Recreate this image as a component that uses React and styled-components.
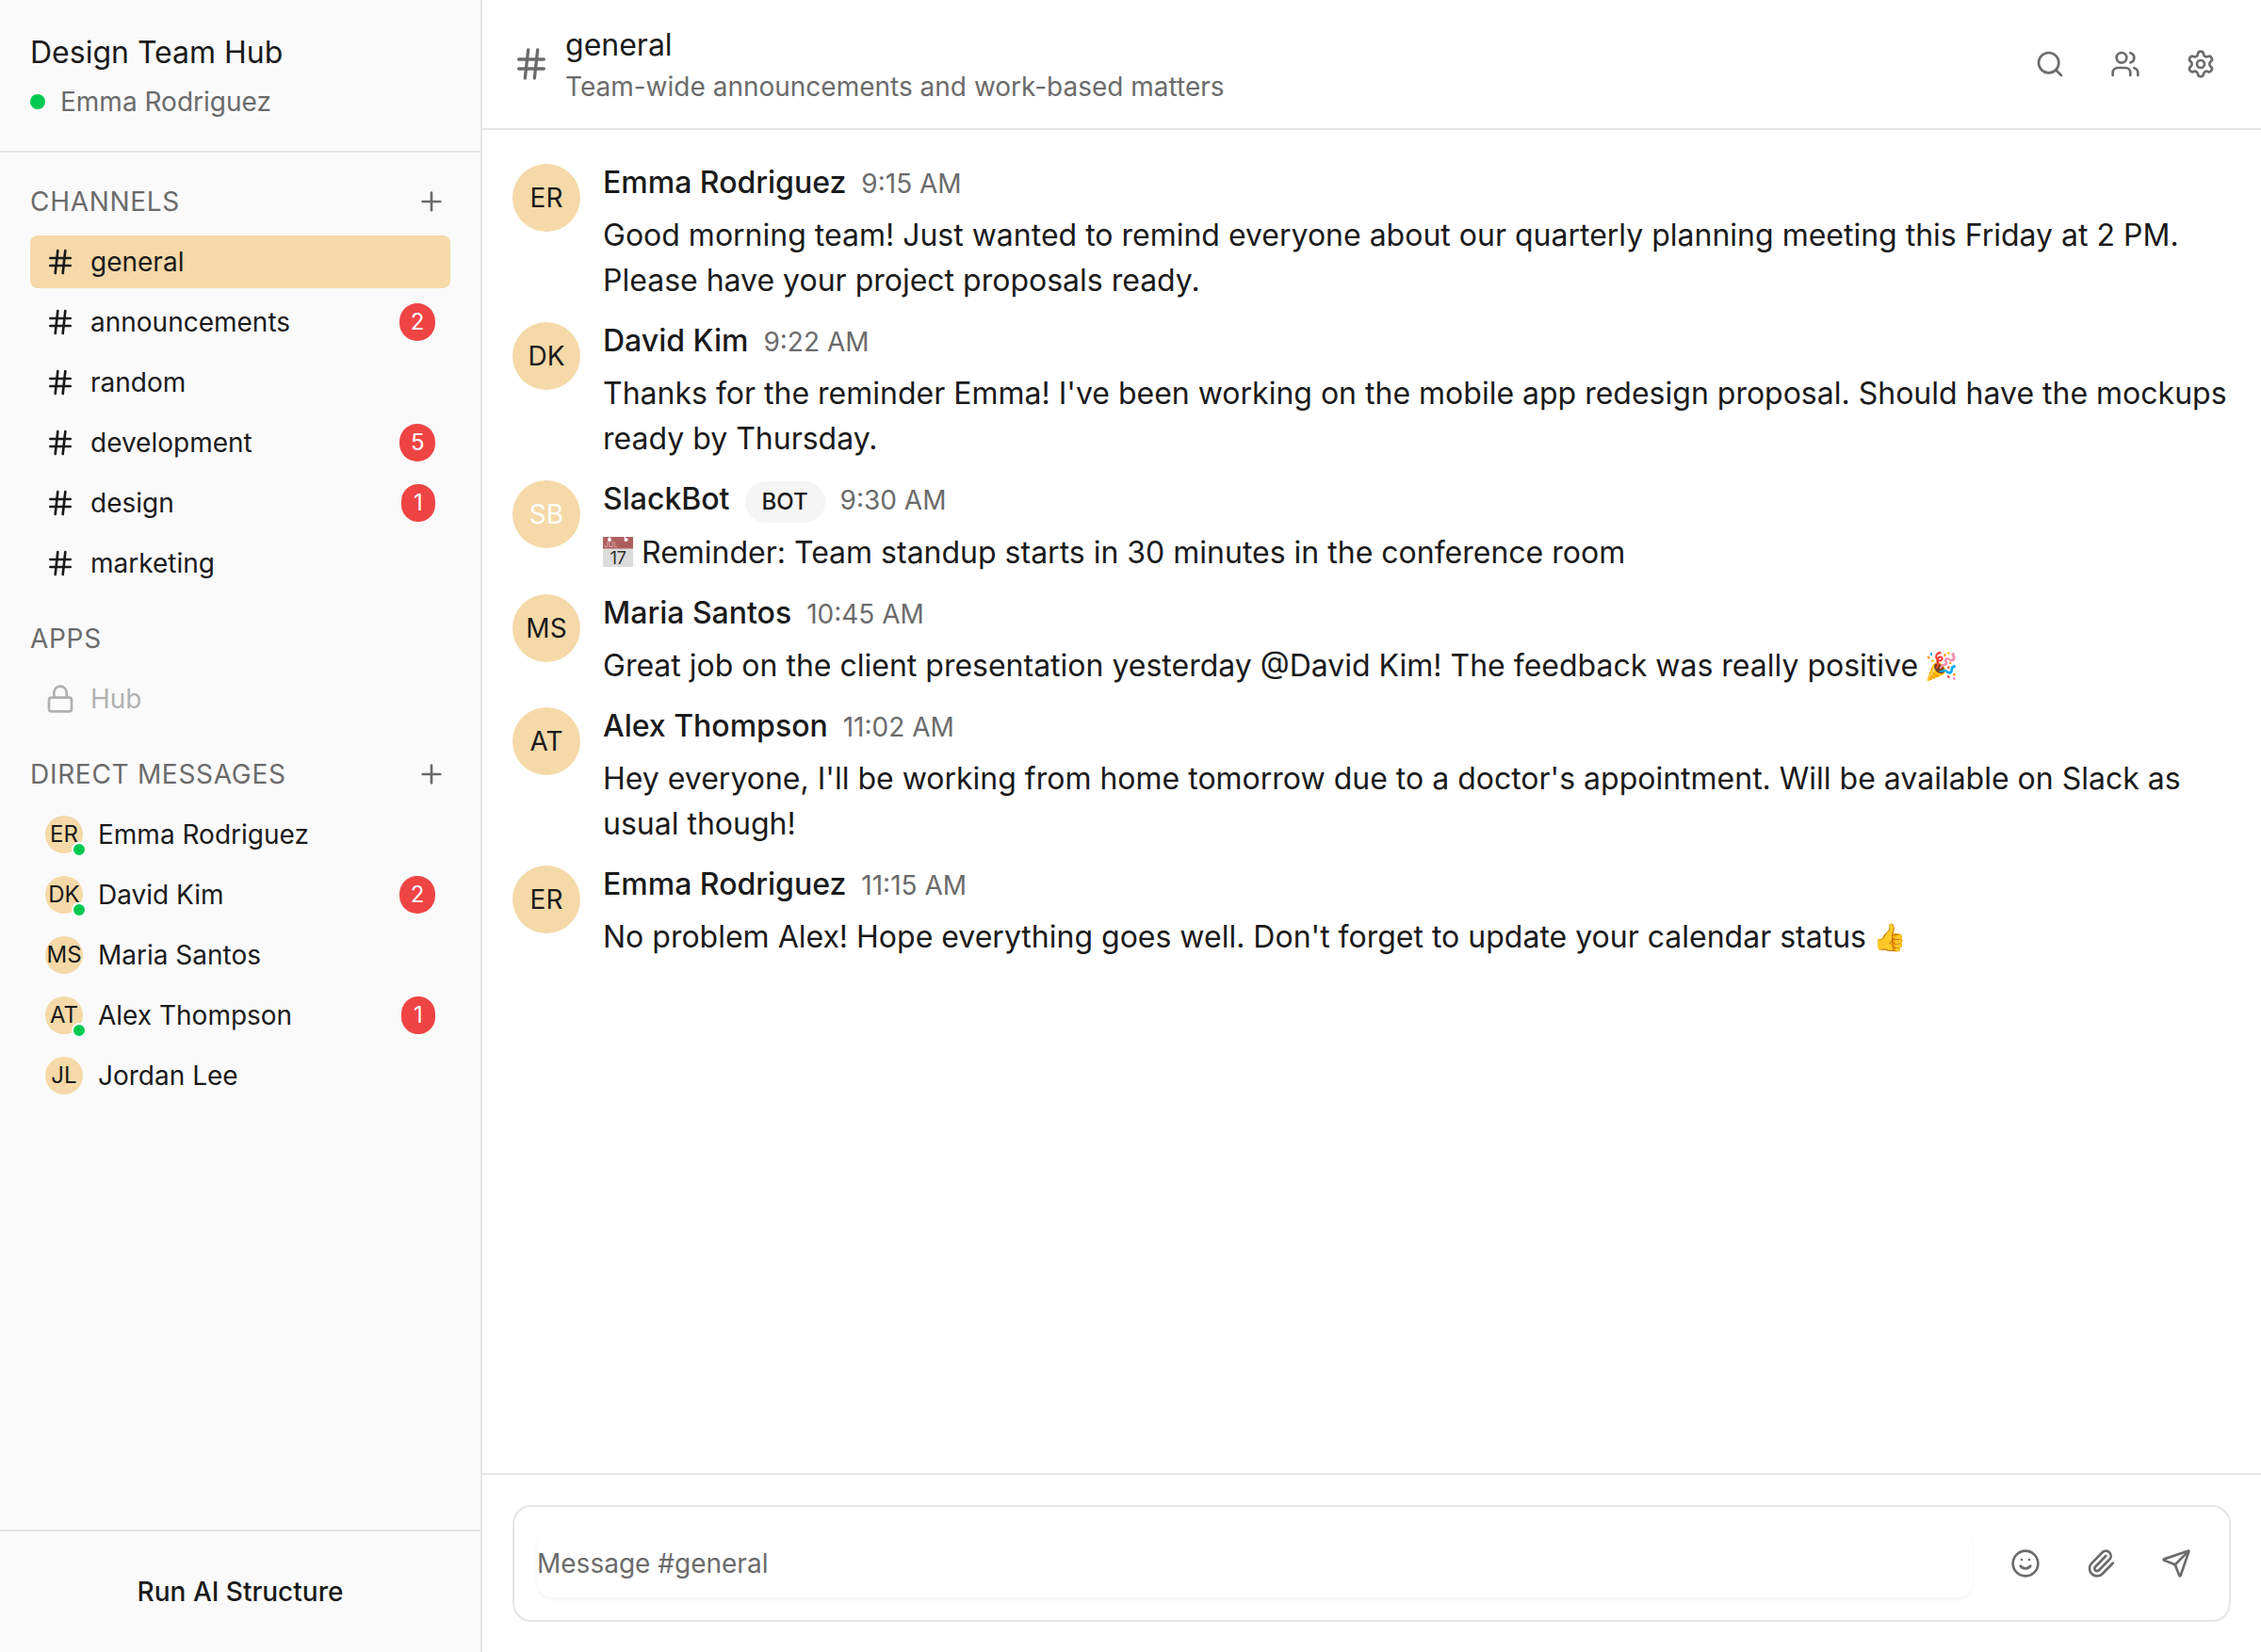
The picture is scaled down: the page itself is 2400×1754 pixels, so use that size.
import React from "react";
import styled, { createGlobalStyle, css } from "styled-components";
import { Hash, Plus, Lock, Search, Users, Settings, Smile, Paperclip, Send } from "lucide-react";

const color = {
  text: "#1a1a1a",
  muted: "#6b6b6b",
  border: "#e5e5e5",
  sidebar: "#fafafa",
  accent: "#f5d9a8",
  green: "#00c950",
  red: "#ef4444",
};

const GlobalStyle = createGlobalStyle`
  *, *::before, *::after { box-sizing: border-box; }
  body { margin: 0; background: #ffffff; }
  h1, h2, h3, p { margin: 0; font-weight: 400; }
  button, input { font: inherit; letter-spacing: inherit; color: inherit; border: 0; padding: 0; background: none; }
  svg { display: block; flex-shrink: 0; }
`;

const Shell = styled.div`
  display: flex;
  width: 2400px;
  height: 1754px;
  overflow: hidden;
  background: #ffffff;
  color: ${color.text};
  font-family: Inter, "Noto Sans", sans-serif;
  font-size: 28px;
  line-height: 40px;
  letter-spacing: 0;
`;

const Sidebar = styled.aside`
  display: flex;
  flex-direction: column;
  flex: 0 0 512px;
  background: ${color.sidebar};
  border-right: 2px solid ${color.border};
`;

const Workspace = styled.header`
  padding: 32px;
  border-bottom: 2px solid ${color.border};
`;

const Title = styled.h1`
  font-size: 32px;
  line-height: 48px;
`;

const Presence = styled.div`
  display: flex;
  align-items: center;
  gap: 16px;
  margin-top: 8px;
  color: ${color.muted};
`;

const Dot = styled.span`
  width: 16px;
  height: 16px;
  border-radius: 50%;
  background: ${color.green};
`;

const Navigation = styled.nav`
  display: flex;
  flex: 1;
  flex-direction: column;
  gap: 32px;
  padding: 32px;
`;

const SectionHead = styled.div`
  display: flex;
  align-items: center;
  justify-content: space-between;
  height: 40px;
  margin-bottom: 16px;
  color: ${color.muted};
`;

const SectionTitle = styled.h2`
  font-size: 28px;
  letter-spacing: 0.7px;
  text-transform: uppercase;
`;

const AddButton = styled.button`
  display: grid;
  place-items: center;
  width: 40px;
  height: 40px;
`;

const List = styled.div`
  display: flex;
  flex-direction: column;
  gap: 8px;
`;

const Item = styled.button`
  display: flex;
  align-items: center;
  gap: 16px;
  height: 56px;
  padding: 0 16px;
  border-radius: 8px;
  text-align: left;
  ${(p) => p.$active && css`background: ${color.accent};`}
  ${(p) => p.$disabled && css`color: ${color.muted}; opacity: 0.5;`}
`;

const Label = styled.span`
  flex: 1;
`;

const Count = styled.span`
  min-width: 36px;
  padding: 4px 11.5px;
  border-radius: 20px;
  background: ${color.red};
  color: #ffffff;
  font-size: 24px;
  line-height: 32px;
  text-align: center;
`;

const Avatar = styled.span`
  position: relative;
  display: flex;
  align-items: center;
  justify-content: center;
  flex-shrink: 0;
  width: ${(p) => p.$size}px;
  height: ${(p) => p.$size}px;
  border-radius: 50%;
  background: ${color.accent};
  color: ${(p) => (p.$light ? "#ffffff" : color.text)};
  font-size: ${(p) => (p.$size > 40 ? 28 : 24)}px;
`;

const Online = styled.span`
  position: absolute;
  right: -4px;
  bottom: -4px;
  width: 16px;
  height: 16px;
  border: 2px solid #ffffff;
  border-radius: 50%;
  background: ${color.green};
`;

const SidebarFooter = styled.footer`
  padding: 32px;
  border-top: 2px solid ${color.border};
`;

const RunButton = styled.button`
  width: 100%;
  height: 64px;
  font-weight: 500;
`;

const Main = styled.main`
  display: flex;
  flex: 1;
  flex-direction: column;
  min-width: 0;
`;

const ChannelHeader = styled.header`
  display: flex;
  align-items: center;
  gap: 16px;
  padding: 24px 32px;
  border-bottom: 2px solid ${color.border};
  color: ${color.muted};
`;

const ChannelInfo = styled.div`
  flex: 1;

  ${Title} { color: ${color.text}; }
`;

const Actions = styled.div`
  display: flex;
  gap: 16px;
  color: ${color.muted};
`;

const IconButton = styled.button`
  display: grid;
  place-items: center;
  width: 64px;
  height: 64px;
`;

const Messages = styled.section`
  display: flex;
  flex: 1;
  flex-direction: column;
  gap: 16px;
  padding: 32px;
`;

const MessageRow = styled.article`
  display: flex;
  gap: 24px;

  > ${Avatar} { margin-top: 4px; }
`;

const MessageBody = styled.div`
  flex: 1;
  min-width: 0;
`;

const Meta = styled.div`
  display: flex;
  align-items: baseline;
  gap: 16px;
  margin-bottom: 8px;
`;

const Author = styled.h3`
  font-size: 32px;
  line-height: 48px;
  font-weight: 500;
`;

const BotTag = styled.span`
  padding: 4px 16px;
  border: 2px solid transparent;
  border-radius: 22px;
  background: #f5f5f5;
  font-size: 24px;
  line-height: 32px;
  font-weight: 500;
`;

const Time = styled.time`
  color: ${color.muted};
`;

const Text = styled.p`
  font-size: 32px;
  line-height: 48px;
`;

const Emoji = styled.span`
  display: inline-block;
  width: 36px;
  margin-left: -2px;
  font-size: 28.5px;
  line-height: 32px;
  vertical-align: 1px;
`;

const CalendarGlyph = styled.svg`
  display: inline-block;
  width: 32px;
  height: 32px;
  vertical-align: -4px;
`;

const Composer = styled.footer`
  padding: 32px;
  border-top: 2px solid ${color.border};
`;

const ComposerBox = styled.div`
  display: flex;
  align-items: center;
  gap: 24px;
  padding: 24px;
  border: 2px solid ${color.border};
  border-radius: 20px;
`;

const Input = styled.input`
  flex: 1;
  height: 72px;
  border-radius: 16px;
  box-shadow: 0 2px 4px rgba(0, 0, 0, 0.05);
  outline: none;

  &::placeholder { color: ${color.muted}; opacity: 1; }
`;

function Calendar() {
  return (
    <CalendarGlyph viewBox="0 0 32 32" role="img" aria-label="📅">
      <rect width="32" height="32" rx="0.6" fill="#dcdcdc" />
      <path d="M0 12.5V.6Q0 0 .6 0h30.8q.6 0 .6.6v11.9Z" fill="#b06060" />
      <path d="M18 7.5h12M18 9.5h12" stroke="#a45757" strokeWidth="1" />
      <circle cx="7" cy="3" r="2" fill="#ffffff" />
      <circle cx="24.5" cy="3" r="2" fill="#ffffff" />
      <path d="M7 0v2M23 0l1 2" stroke="#ffffff" strokeWidth="1.4" />
      <text x="1.5" y="11.2" fontSize="7.4" fill="#dfb5b5">JUL</text>
      <text x="16" y="28.6" fontSize="18.5" letterSpacing="-0.4" textAnchor="middle" fill="#303030">17</text>
    </CalendarGlyph>
  );
}

const channels = [
  { name: "general", active: true },
  { name: "announcements", count: 2 },
  { name: "random" },
  { name: "development", count: 5 },
  { name: "design", count: 1 },
  { name: "marketing" },
];

const people = [
  { initials: "ER", name: "Emma Rodriguez", online: true },
  { initials: "DK", name: "David Kim", online: true, count: 2 },
  { initials: "MS", name: "Maria Santos" },
  { initials: "AT", name: "Alex Thompson", online: true, count: 1 },
  { initials: "JL", name: "Jordan Lee" },
];

const messages = [
  { initials: "ER", author: "Emma Rodriguez", time: "9:15 AM", text: "Good morning team! Just wanted to remind everyone about our quarterly planning meeting this Friday at 2 PM. Please have your project proposals ready." },
  { initials: "DK", author: "David Kim", time: "9:22 AM", text: "Thanks for the reminder Emma! I've been working on the mobile app redesign proposal. Should have the mockups ready by Thursday." },
  { initials: "SB", author: "SlackBot", bot: true, time: "9:30 AM", text: <><Calendar /> Reminder: Team standup starts in 30 minutes in the conference room</> },
  { initials: "MS", author: "Maria Santos", time: "10:45 AM", text: <>Great job on the client presentation yesterday @David Kim! The feedback was really positive <Emoji>🎉</Emoji></> },
  { initials: "AT", author: "Alex Thompson", time: "11:02 AM", text: "Hey everyone, I'll be working from home tomorrow due to a doctor's appointment. Will be available on Slack as usual though!" },
  { initials: "ER", author: "Emma Rodriguez", time: "11:15 AM", text: <>No problem Alex! Hope everything goes well. Don't forget to update your calendar status <Emoji>👍</Emoji></> },
];

function Section({ title, addable, children }) {
  return (
    <section>
      <SectionHead>
        <SectionTitle>{title}</SectionTitle>
        {addable && <AddButton aria-label={`Add to ${title}`}><Plus size={32} /></AddButton>}
      </SectionHead>
      <List>{children}</List>
    </section>
  );
}

export default function App() {
  return (
    <Shell>
      <GlobalStyle />
      <Sidebar>
        <Workspace>
          <Title>Design Team Hub</Title>
          <Presence><Dot />Emma Rodriguez</Presence>
        </Workspace>
        <Navigation>
          <Section title="Channels" addable>
            {channels.map((c) => (
              <Item key={c.name} $active={c.active}>
                <Hash size={32} />
                <Label>{c.name}</Label>
                {c.count && <Count>{c.count}</Count>}
              </Item>
            ))}
          </Section>
          <Section title="Apps">
            <Item $disabled><Lock size={32} /><Label>Hub</Label></Item>
          </Section>
          <Section title="Direct Messages" addable>
            {people.map((p) => (
              <Item key={p.name}>
                <Avatar $size={40}>{p.initials}{p.online && <Online />}</Avatar>
                <Label>{p.name}</Label>
                {p.count && <Count>{p.count}</Count>}
              </Item>
            ))}
          </Section>
        </Navigation>
        <SidebarFooter><RunButton>Run AI Structure</RunButton></SidebarFooter>
      </Sidebar>
      <Main>
        <ChannelHeader>
          <Hash size={40} />
          <ChannelInfo>
            <Title as="h2">general</Title>
            <p>Team-wide announcements and work-based matters</p>
          </ChannelInfo>
          <Actions>
            <IconButton aria-label="Search"><Search size={32} /></IconButton>
            <IconButton aria-label="Members"><Users size={32} /></IconButton>
            <IconButton aria-label="Settings"><Settings size={32} /></IconButton>
          </Actions>
        </ChannelHeader>
        <Messages>
          {messages.map((m) => (
            <MessageRow key={m.time}>
              <Avatar $size={72} $light={m.bot}>{m.initials}</Avatar>
              <MessageBody>
                <Meta>
                  <Author>{m.author}</Author>
                  {m.bot && <BotTag>BOT</BotTag>}
                  <Time>{m.time}</Time>
                </Meta>
                <Text>{m.text}</Text>
              </MessageBody>
            </MessageRow>
          ))}
        </Messages>
        <Composer>
          <ComposerBox>
            <Input placeholder="Message #general" />
            <Actions>
              <IconButton aria-label="Emoji"><Smile size={32} /></IconButton>
              <IconButton aria-label="Attach"><Paperclip size={32} /></IconButton>
              <IconButton aria-label="Send"><Send size={32} /></IconButton>
            </Actions>
          </ComposerBox>
        </Composer>
      </Main>
    </Shell>
  );
}
